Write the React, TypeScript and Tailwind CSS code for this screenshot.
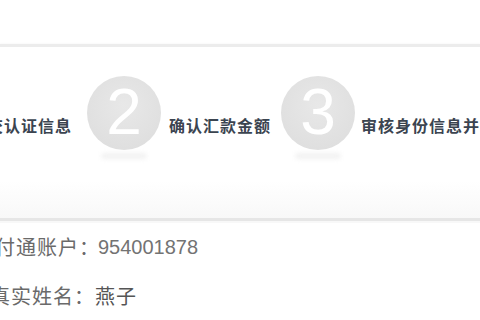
const cjk = "font-['Noto_Sans_CJK_SC',sans-serif]";

function StepCircle({ n }: { n: string }) {
  return (
    <div className="flex flex-col items-center shrink-0">
      <div className="w-[74px] h-[74px] rounded-full bg-[radial-gradient(circle_at_50%_40%,#e8e8e8,#dcdcdc)] flex items-center justify-center">
        <span className="-mt-[2px] font-['Liberation_Sans',sans-serif] text-[64px] leading-none text-white">{n}</span>
      </div>
      <div className="mt-[3px] w-[46px] h-[6px] rounded-full bg-[#f2f2f2] blur-[2px]" />
    </div>
  );
}

function StepLabel({ text, className }: { text: string; className?: string }) {
  return (
    <div className={`${cjk} shrink-0 mt-[39px] text-[16px] leading-[20px] font-bold tracking-[1px] text-[#3b4450] whitespace-nowrap ${className ?? ''}`}>
      {text}
    </div>
  );
}

export default function App() {
  return (
    <div className="w-[480px] h-[320px] bg-white overflow-hidden">
      <div className="h-[44px]" />
      <div className="h-[3px] bg-[#ececec] shadow-[0_0_3px_#f2f2f2]" />

      <div className="h-[171px] pt-[29px] flex items-start bg-[linear-gradient(to_bottom,#ffffff_78%,#f8f8f8)]">
        <StepLabel text="提交认证信息" className="ml-[-30px] mr-[15px]" />
        <StepCircle n="2" />
        <StepLabel text="确认汇款金额" className="ml-[8px] mr-[10px]" />
        <StepCircle n="3" />
        <StepLabel text="审核身份信息并完成认证" className="ml-[6px]" />
      </div>
      <div className="h-[3px] bg-[#e6e6e6]" />
      <div className="h-[2px] bg-[#f8f8f8]" />

      <div className={`${cjk} text-[20px] text-[#6a6a6a] tracking-[1px] whitespace-nowrap`}>
        <div className="h-[48px] flex items-center ml-[-26px]">
          <span>支付通账户：</span>
          <span className="ml-[-2px] font-['Liberation_Sans',sans-serif] tracking-normal text-[#737373]">954001878</span>
        </div>
        <div className="h-[50px] flex items-center ml-[-10px]">
          <span>真实姓名：</span>
          <span className="text-[#555]">燕子</span>
        </div>
      </div>
    </div>
  );
}
